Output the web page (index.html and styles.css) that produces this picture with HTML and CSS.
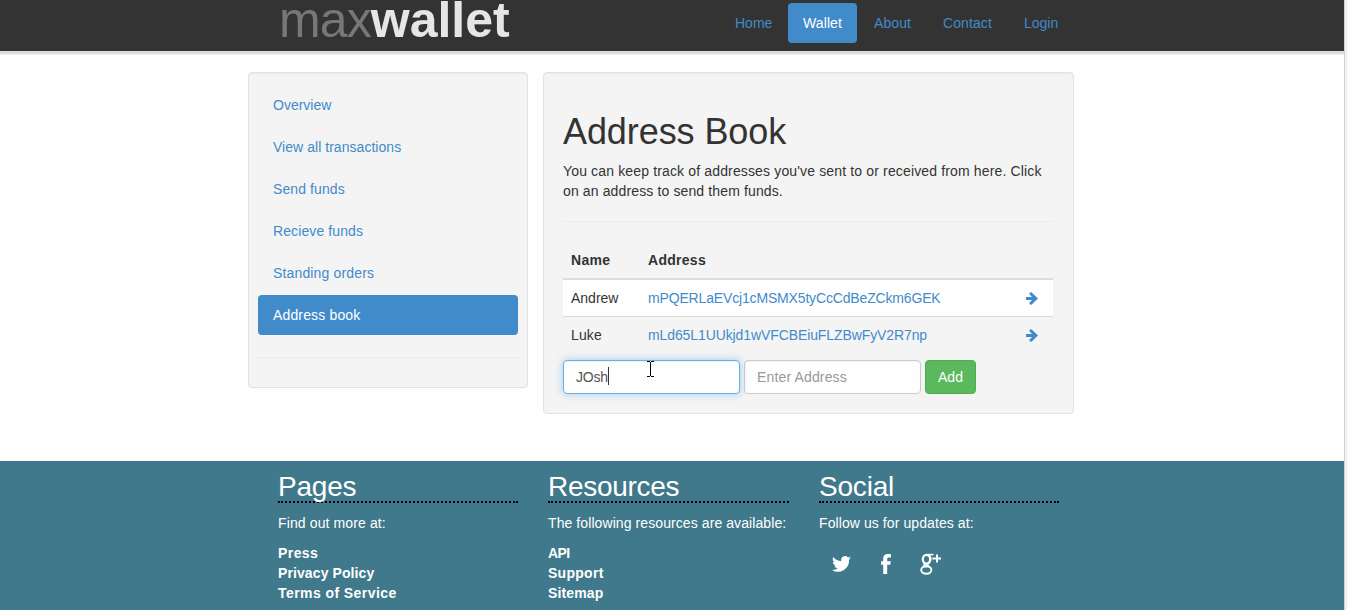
FILE: index.html
```html
<!DOCTYPE html>
<html lang="en">
<head>
<meta charset="utf-8">
<title>maxwallet - Address Book</title>
<link rel="stylesheet" href="styles.css">
</head>
<body>
<div class="page">
  <header class="header">
    <div class="header-inner">
      <a class="logo"><span class="logo-light">max</span><span class="logo-bold">wallet</span></a>
      <nav class="nav">
        <a class="nav-home">Home</a><a class="nav-wallet active">Wallet</a><a class="nav-about">About</a><a class="nav-contact">Contact</a><a class="nav-login">Login</a>
      </nav>
    </div>
  </header>
  <main class="content">
    <aside class="panel sidebar">
      <a>Overview</a>
      <a class="s-view">View all transactions</a>
      <a class="s-send">Send funds</a>
      <a class="s-receive">Recieve funds</a>
      <a class="s-standing">Standing orders</a>
      <a class="s-address active">Address book</a>
      <hr>
    </aside>
    <section class="panel book">
      <h1>Address Book</h1>
      <p class="intro"><span class="intro-first">You can keep track of addresses you've sent to or received from here. Click</span><br><span class="intro-second">on an address to send them funds.</span></p>
      <hr>
      <div class="table">
        <div class="row head"><span class="th-name">Name</span><span class="th-address">Address</span></div>
        <div class="row striped"><span class="andrew">Andrew</span><a class="addr-one">mPQERLaEVcj1cMSMX5tyCcCdBeZCkm6GEK</a><svg class="arrow" viewBox="0 0 12 13"><path d="M0 5h6L3.500 2.200V.8L5.500.3 12 6.500 5.500 12.700 3.500 12.200v-1.400L6 8H0z"/></svg></div>
        <div class="row last"><span class="luke">Luke</span><a class="addr-two">mLd65L1UUkjd1wVFCBEiuFLZBwFyV2R7np</a><svg class="arrow" viewBox="0 0 12 13"><path d="M0 5h6L3.500 2.200V.8L5.500.3 12 6.500 5.500 12.700 3.500 12.200v-1.400L6 8H0z"/></svg></div>
      </div>
      <div class="form">
        <div class="field focused"><span>JOsh</span><i class="caret"></i>
          <svg class="pointer" viewBox="0 0 7 16"><path d="M0 .5h3M4 .5h3M3.500 1v14M0 15.500h3M4 15.500h3"/></svg>
        </div>
        <div class="field placeholder">Enter Address</div>
        <a class="add">Add</a>
      </div>
    </section>
  </main>
  <footer class="footer">
    <section class="col">
      <h2 class="h-pages">Pages</h2>
      <p class="p-pages">Find out more at:</p>
      <a class="l-press">Press</a><a class="l-privacy">Privacy Policy</a><a class="l-terms">Terms of Service</a>
    </section>
    <section class="col wide">
      <h2 class="h-resources">Resources</h2>
      <p class="p-resources">The following resources are available:</p>
      <a class="l-api">API</a><a class="l-support">Support</a><a class="l-sitemap">Sitemap</a>
    </section>
    <section class="col">
      <h2 class="h-social">Social</h2>
      <p class="p-social">Follow us for updates at:</p>
      <div class="social">
        <svg width="19" height="16" viewBox="0 0 24 20"><path d="M24 2.400a10 10 0 0 1-2.800.8A5 5 0 0 0 23.300.500a10 10 0 0 1-3.100 1.200 4.900 4.900 0 0 0-8.400 4.500A14 14 0 0 1 1.700 1a4.900 4.900 0 0 0 1.500 6.600A5 5 0 0 1 1 7c0 2.300 1.700 4.400 3.900 4.900a5 5 0 0 1-2.200.1 4.900 4.900 0 0 0 4.600 3.400A9.900 9.900 0 0 1 0 17.500 14 14 0 0 0 21.500 5z"/></svg>
        <svg width="10" height="20" viewBox="0 0 10 20"><path d="M2.200 20V10.700H0V7.200h2.200V4.600C2.200 1.500 4 0 6.700 0 8.300 0 9.600.1 10 .2v3.300H8c-1.500 0-1.800.7-1.800 1.700v2h3.600l-.5 3.500H6.200V20z"/></svg>
        <svg width="21" height="22" viewBox="0 0 21 22"><g fill="none" stroke="#fff"><ellipse cx="6.500" cy="6.300" rx="3.700" ry="4.400" stroke-width="2.300"/><path stroke-width="1.500" d="M6.500 1.600h7"/><path stroke-width="2" d="M9 2.500c2 2 2.300 5-.2 7.300-2.500 2.200-2.300 2.500.2 3.700"/><ellipse cx="6.300" cy="17" rx="5.100" ry="3.700" stroke-width="1.900"/><path stroke-width="1.700" d="M5.500 10.700c-2.500 1.300-2 2.600 1 3.100"/><path stroke-width="2" d="M12.500 5.500H21M17 1.500v8"/></g></svg>
      </div>
    </section>
  </footer>
</div>
</body>
</html>
```
FILE: styles.css
```css
* { box-sizing: border-box; }
body { margin: 0; height: 610px; overflow: hidden; background: #f0f0f0; color: #333; font: 14px/20px "Liberation Sans", Arial, sans-serif; }
.page { width: 1345px; height: 610px; display: flex; flex-direction: column; background: #fefefe; border-right: 1px solid #d2d2d2; }
a { color: #428bca; text-decoration: none; }
hr { width: 100%; height: 1px; margin: 0; border: 0; background: #eaeaea; }
.header { height: 54px; flex: none; background: #333; border-bottom: 3px solid #ddd; box-shadow: 0 1px #f2f2f2; }
.header-inner { width: 796px; margin-left: 278px; display: flex; justify-content: space-between; align-items: flex-start; white-space: nowrap; }
.logo { font-size: 50px; line-height: 40px; padding-left: 1px; color: #e6e6e6; }
.logo-light { color: #777; letter-spacing: -0.9px; }
.logo-bold { font-weight: bold; }
.nav { display: flex; gap: 2px; padding-top: 3px; }
.nav a { padding: 10px 0 10px 15px; height: 40px; border-radius: 4px; }
.nav .nav-home { width: 66px; }
.nav .nav-wallet { width: 69px; }
.nav .nav-about { width: 67px; }
.nav .nav-contact { width: 79px; }
.nav .nav-login { width: 65px; }
.nav .nav-wallet, .nav .nav-about, .nav .nav-contact { letter-spacing: .1px; }
.nav .active, .sidebar .active { background: #428bca; color: #fff; }
.content { display: flex; align-items: flex-start; gap: 15px; height: 407px; padding: 18px 0 0 248px; flex: none; }
.panel { background: #f4f4f4; border: 1px solid #e2e2e2; border-radius: 4px; box-shadow: inset 0 1px 1px rgba(0,0,0,.04); }
.sidebar { width: 280px; height: 316px; padding: 12px 9px; display: flex; flex-direction: column; gap: 2px; }
.sidebar a { height: 40px; padding: 10px 15px; border-radius: 4px; }
.sidebar hr { margin-top: 20px; }
.s-view { letter-spacing: .04px; }
.s-send, .s-receive { letter-spacing: .1px; }
.s-standing, .s-address { letter-spacing: .15px; }
.book { width: 531px; height: 342px; padding: 39px 20px 0 19px; }
h1 { margin: 0; font-size: 36px; line-height: 40px; font-weight: 400; letter-spacing: -.08px; }
.intro { margin: 9px 0 20px; white-space: nowrap; }
.intro-first { letter-spacing: .148px; }
.intro-second { letter-spacing: .13px; }
.table { margin-top: 20px; }
.row { height: 37px; display: flex; align-items: center; padding: 0 15px 0 8px; white-space: nowrap; }
.row > :first-child { width: 77px; }
.head { height: 38px; font-weight: bold; border-bottom: 2px solid #ddd; letter-spacing: .28px; }
.striped { background: #fefefe; border-bottom: 1px solid #ddd; }
.last > span, .last > a { margin-bottom: 2px; }
.luke { letter-spacing: .15px; }
.addr-one { letter-spacing: -.16px; }
.addr-two { letter-spacing: -.1px; }
.arrow { width: 12px; height: 13px; margin-left: auto; fill: #428bca; }
.form { display: flex; gap: 4px; margin-top: 6px; }
.field { width: 177px; height: 34px; padding: 6px 12px; border: 1px solid #ccc; border-radius: 4px; background: #fefefe; color: #555; box-shadow: inset 0 1px 1px rgba(0,0,0,.05); }
.focused { position: relative; display: flex; border-color: #66afe9; letter-spacing: -.25px; box-shadow: inset 0 1px 1px rgba(0,0,0,.05), 0 0 8px rgba(102,175,233,.6); }
.caret { width: 1px; height: 18px; background: #333; }
.pointer { position: absolute; left: 83px; top: 0; width: 7px; height: 16px; fill: none; stroke: #000; shape-rendering: crispEdges; }
.placeholder { color: #999; letter-spacing: .15px; }
.add { width: 51px; height: 34px; padding: 6px 0; border: 1px solid #4cae4c; border-radius: 4px; background: #5cb85c; color: #fff; text-align: center; }
.footer { flex: 1; background: #40798b; display: flex; gap: 30px; padding: 10px 0 0 278px; color: #fff; }
.col { width: 240px; white-space: nowrap; }
.wide { width: 241px; }
.footer h2 { margin: 0 0 10px; height: 32px; font-size: 28px; line-height: 31px; font-weight: 400; letter-spacing: -.2px; border-bottom: 2px dotted #000; }
.footer .h-resources { letter-spacing: -.28px; }
.footer p { margin: 0 0 10px; }
.p-pages { letter-spacing: .12px; }
.p-resources, .p-social { letter-spacing: .085px; }
.footer a { display: block; color: #fff; font-weight: bold; }
.l-press, .l-terms { letter-spacing: .43px; }
.l-privacy { letter-spacing: .1px; }
.l-api { letter-spacing: -.6px; }
.l-support { letter-spacing: .28px; }
.l-sitemap { letter-spacing: .15px; }
.social { display: flex; align-items: center; height: 24px; margin-top: 19px; padding-left: 13px; }
.social svg { fill: #fff; flex: none; }
.social svg + svg { margin-left: 30px; }
.social svg:last-child { margin-left: 29px; }
```
